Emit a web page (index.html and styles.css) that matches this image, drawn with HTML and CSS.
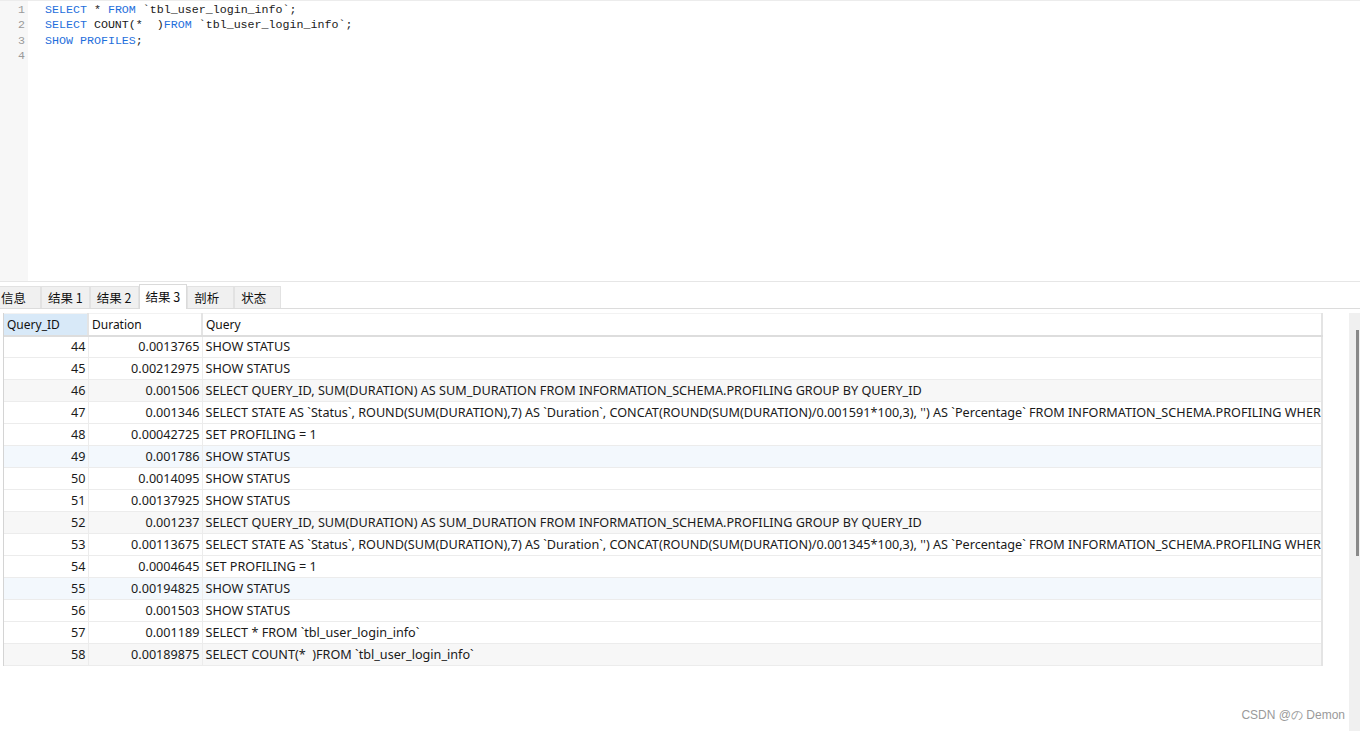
FILE: index.html
```html
<!DOCTYPE html>
<html lang="zh">
<head>
<meta charset="utf-8">
<title>Navicat</title>
<link rel="stylesheet" href="styles.css">
</head>
<body>
<div class="editor">
  <div class="gutter">
    <div class="ln">1</div>
    <div class="ln">2</div>
    <div class="ln">3</div>
    <div class="ln">4</div>
  </div>
  <div class="code">
    <div class="line"><span class="kw">SELECT</span> * <span class="kw">FROM</span> `tbl_user_login_info`;</div>
    <div class="line"><span class="kw">SELECT</span> COUNT(*&nbsp; )<span class="kw">FROM</span> `tbl_user_login_info`;</div>
    <div class="line"><span class="kw">SHOW</span> <span class="kw">PROFILES</span>;</div>
    <div class="line">&nbsp;</div>
  </div>
</div>
<div class="splitter"></div>
<div class="tabs">
  <div class="tab first">信息</div>
  <div class="tab">结果 1</div>
  <div class="tab">结果 2</div>
  <div class="tab active">结果 3</div>
  <div class="tab">剖析</div>
  <div class="tab">状态</div>
</div>
<div class="result">
  <div class="grid-wrap">
    <table class="grid">
      <colgroup><col class="c1"><col class="c2"><col class="c3"></colgroup>
      <thead>
        <tr><th class="sel">Query_ID</th><th>Duration</th><th>Query</th></tr>
      </thead>
      <tbody>
        <tr><td class="num">44</td><td class="num">0.0013765</td><td>SHOW STATUS</td></tr>
        <tr><td class="num">45</td><td class="num">0.00212975</td><td>SHOW STATUS</td></tr>
        <tr class="g"><td class="num">46</td><td class="num">0.001506</td><td>SELECT QUERY_ID, SUM(DURATION) AS SUM_DURATION FROM INFORMATION_SCHEMA.PROFILING GROUP BY QUERY_ID</td></tr>
        <tr><td class="num">47</td><td class="num">0.001346</td><td>SELECT STATE AS `Status`, ROUND(SUM(DURATION),7) AS `Duration`, CONCAT(ROUND(SUM(DURATION)/0.001591*100,3), '') AS `Percentage` FROM INFORMATION_SCHEMA.PROFILING WHERE QUERY_ID=46 GROUP BY STATE</td></tr>
        <tr><td class="num">48</td><td class="num">0.00042725</td><td>SET PROFILING = 1</td></tr>
        <tr class="b"><td class="num">49</td><td class="num">0.001786</td><td>SHOW STATUS</td></tr>
        <tr><td class="num">50</td><td class="num">0.0014095</td><td>SHOW STATUS</td></tr>
        <tr><td class="num">51</td><td class="num">0.00137925</td><td>SHOW STATUS</td></tr>
        <tr class="g"><td class="num">52</td><td class="num">0.001237</td><td>SELECT QUERY_ID, SUM(DURATION) AS SUM_DURATION FROM INFORMATION_SCHEMA.PROFILING GROUP BY QUERY_ID</td></tr>
        <tr><td class="num">53</td><td class="num">0.00113675</td><td>SELECT STATE AS `Status`, ROUND(SUM(DURATION),7) AS `Duration`, CONCAT(ROUND(SUM(DURATION)/0.001345*100,3), '') AS `Percentage` FROM INFORMATION_SCHEMA.PROFILING WHERE QUERY_ID=52 GROUP BY STATE</td></tr>
        <tr><td class="num">54</td><td class="num">0.0004645</td><td>SET PROFILING = 1</td></tr>
        <tr class="b"><td class="num">55</td><td class="num">0.00194825</td><td>SHOW STATUS</td></tr>
        <tr><td class="num">56</td><td class="num">0.001503</td><td>SHOW STATUS</td></tr>
        <tr><td class="num">57</td><td class="num">0.001189</td><td>SELECT * FROM `tbl_user_login_info`</td></tr>
        <tr class="g"><td class="num">58</td><td class="num">0.00189875</td><td>SELECT COUNT(*&nbsp; )FROM `tbl_user_login_info`</td></tr>
      </tbody>
    </table>
  </div>
  <div class="vscroll"><div class="thumb"></div></div>
</div>
<div class="watermark">CSDN @の Demon</div>
</body>
</html>
```

FILE: styles.css
```css
html, body {
  margin: 0;
  padding: 0;
  background: #ffffff;
  height: 731px;
  overflow: hidden;
}
body {
  font-family: "Noto Sans", "Noto Sans CJK SC", sans-serif;
  font-size: 12px;
  color: #1a1a1a;
  position: relative;
}

/* editor */
.editor {
  display: flex;
  height: 281px;
  border-top: 1px solid #ececec;
  box-sizing: border-box;
}
.gutter {
  width: 28px;
  background: #f7f7f7;
  padding-top: 1px;
  box-sizing: border-box;
}
.ln {
  height: 15.3px;
  line-height: 15.3px;
  text-align: right;
  padding-right: 3px;
  font-family: "Liberation Mono", monospace;
  font-size: 11.6px;
  color: #9a9a9a;
}
.code {
  flex: 1;
  padding-top: 1px;
  padding-left: 17px;
  font-family: "Liberation Mono", monospace;
  font-size: 11.65px;
  color: #1a1a1a;
}
.line {
  height: 15.3px;
  line-height: 15.3px;
  white-space: pre;
}
.kw { color: #1f6fdc; }

.splitter {
  height: 1px;
  background: #e6e6e6;
  margin-bottom: 2px;
}

/* tabs */
.tabs {
  display: flex;
  align-items: flex-end;
  height: 24px;
  border-bottom: 1px solid #dcdcdc;
  margin-left: -6px;
}
.tab {
  height: 21px;
  line-height: 21px;
  min-width: 33px;
  padding: 0 6px;
  background: #f0f0f0;
  border: 1px solid #e2e2e2;
  border-bottom: none;
  font-family: "Noto Sans CJK SC", sans-serif;
  font-size: 12.5px;
  color: #111;
}
.tab.active {
  background: #ffffff;
  height: 24px;
  line-height: 23px;
  border-color: #dadada;
  position: relative;
  top: 1px;
}

/* result grid */
.result {
  display: flex;
  align-items: flex-start;
  margin-top: 4px;
}
.grid-wrap {
  width: 1320px;
  box-sizing: border-box;
  overflow: hidden;
  border-left: 1px solid #d4d4d4;
  margin-left: 3px;
}
.grid {
  border-collapse: collapse;
  table-layout: fixed;
  width: 1319px;
}
.c1 { width: 84px; }
.c2 { width: 114px; }
.grid th, .grid td {
  padding: 0 3px;
  white-space: nowrap;
  overflow: hidden;
  border-right: 1px solid #ececec;
  border-bottom: 1px solid #ececec;
  font-weight: normal;
  text-align: left;
}
.grid thead tr { height: 22px; }
.grid tbody tr { height: 22px; }
.grid td { font-size: 12.65px; padding-bottom: 2px; }
.grid th {
  border-bottom: 2px solid #dddddd;
  border-right: 2px solid #e4e4e4;
  border-top: 1px solid #f2f2f2;
  color: #111;
}
.grid th.sel { background: #d8e9f8; }
.grid th:last-child, .grid td:last-child { border-right: 2px solid #e4e4e4; }
.grid td.num { text-align: right; padding-right: 2px; }
.grid tr.g td { background: #f7f7f7; }
.grid tr.b td { background: #f3f8fd; }

.vscroll {
  width: 11px;
  margin-left: auto;
  background: #f0f0f0;
  height: 420px;
  position: relative;
}
.thumb {
  position: absolute;
  left: 7px;
  top: 17px;
  width: 3px;
  height: 226px;
  background: #8a8a8a;
}

.watermark {
  position: absolute;
  right: 15px;
  top: 707px;
  font-family: "Liberation Sans", Arial, sans-serif;
  font-size: 12px;
  color: #9a9a9a;
}
```
